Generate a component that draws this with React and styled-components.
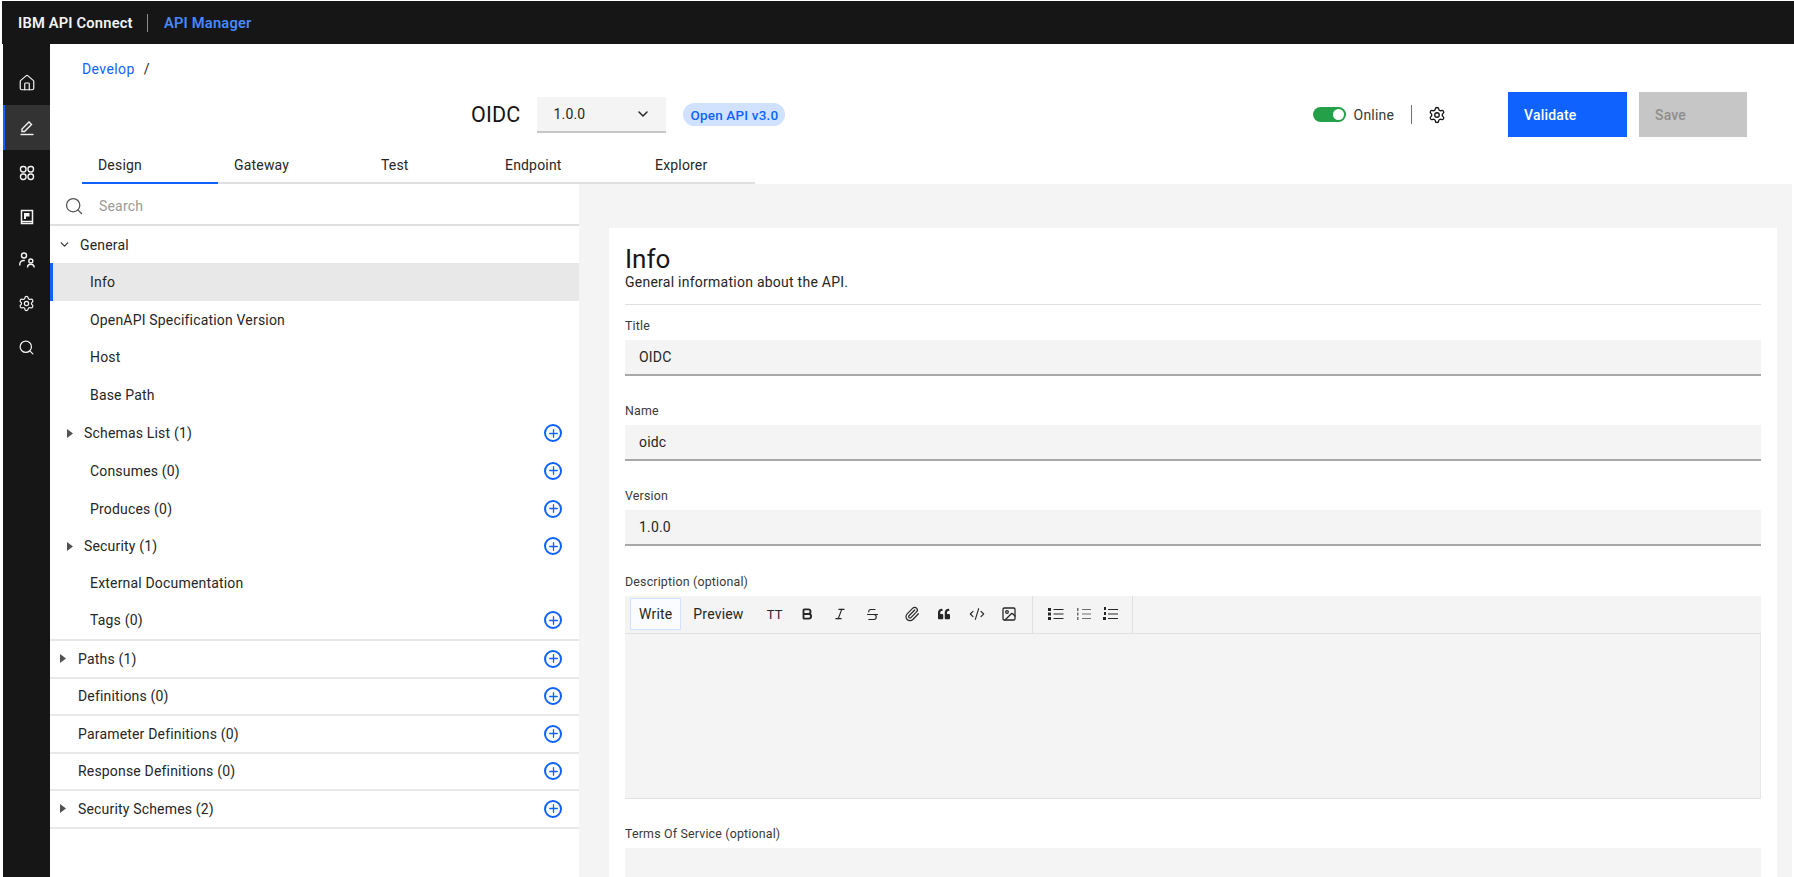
import React from "react";
import styled, { createGlobalStyle } from "styled-components";
import {
  Bold,
  ChevronDown,
  CodeXml,
  House,
  Image as ImageIcon,
  Italic,
  Paperclip,
  Plus,
  Search,
  Settings,
  Strikethrough,
} from "lucide-react";
import { FaQuoteLeft } from "react-icons/fa";

const FONT = `Roboto, "Liberation Sans", sans-serif`;

const Global = createGlobalStyle`
  html, body { margin: 0; height: 100%; background: #fff; overflow: hidden; }
  * { box-sizing: border-box; }
  body { font-family: ${FONT}; font-size: 14px; color: #262626; letter-spacing: .18px; }
`;

function PenIcon() {
  return (
    <svg width="18" height="18" viewBox="0 0 18 18" fill="none" stroke="currentColor" strokeWidth="1.4">
      <path d="M4 12.5V10l7-7 2.5 2.5-7 7z" />
      <path d="M2.5 15.5h13" />
    </svg>
  );
}

function AppsIcon() {
  return (
    <svg width="18" height="18" viewBox="0 0 18 18" fill="none" stroke="currentColor" strokeWidth="1.4">
      <rect x="2.5" y="2.5" width="5.5" height="5.5" rx="2.4" />
      <rect x="10" y="2.5" width="5.5" height="5.5" rx="2.4" />
      <rect x="2.5" y="10" width="5.5" height="5.5" rx="2.4" />
      <rect x="10" y="10" width="5.5" height="5.5" rx="2.4" />
    </svg>
  );
}

function BookIcon() {
  return (
    <svg width="18" height="18" viewBox="0 0 18 18" fill="none" stroke="currentColor" strokeWidth="1.5">
      <rect x="3.5" y="2.5" width="11" height="13" />
      <path d="M6 5h5.5v3.5H8V11H6z" fill="currentColor" stroke="none" />
      <path d="M3.5 13.5h11" />
    </svg>
  );
}

function UsersIcon() {
  return (
    <svg width="18" height="18" viewBox="0 0 18 18" fill="none" stroke="currentColor" strokeWidth="1.4">
      <circle cx="6" cy="4.5" r="2.5" />
      <path d="M1.8 14.5v-1.2a3.8 3.8 0 0 1 3.8-3.8h1.2" />
      <circle cx="12.8" cy="10" r="2" />
      <path d="M9.5 16.5a3.3 3.3 0 0 1 6.6 0" />
    </svg>
  );
}

function BulletList() {
  return (
    <svg width="16" height="14" viewBox="0 0 16 14" fill="currentColor">
      <path d="M0 1h3v3H0zM0 5.5h3v3H0zM0 10h3v3H0z" />
      <path d="M5.5 2h10v1h-10zM5.5 6.5h10v1h-10zM5.5 11h10v1h-10z" />
    </svg>
  );
}

function OrderedList() {
  return (
    <svg width="16" height="14" viewBox="0 0 16 14" fill="#6f6f6f">
      <path d="M1 1h1.5v3H1zM1 5.5h1.5v3H1zM1 10h1.5v3H1z" />
      <path d="M6 2h9v1H6zM6 6.5h9v1H6zM6 11h9v1H6z" />
    </svg>
  );
}

function TaskList() {
  return (
    <svg width="16" height="14" viewBox="0 0 16 14" fill="currentColor">
      <path d="M1 0h2v3H1zM1 5h2v3H1zM0 10h3v3H0z" />
      <path d="M5 2h10v1H5zM5 6.5h10v1H5zM5 11h10v1H5z" />
    </svg>
  );
}

function CaretRight() {
  return (
    <svg width="6" height="9" viewBox="0 0 6 9">
      <path d="M0 0l6 4.5L0 9z" fill="#525252" />
    </svg>
  );
}

function AddButton() {
  return (
    <AddCircle>
      <Plus size={13} strokeWidth={2.4} />
    </AddCircle>
  );
}

const railItems = [
  { key: "home", height: 45, icon: <House size={18} strokeWidth={1.6} /> },
  { key: "develop", height: 45, icon: <PenIcon />, active: true },
  { key: "apps", height: 45, icon: <AppsIcon /> },
  { key: "book", height: 43, icon: <BookIcon /> },
  { key: "users", height: 44, icon: <UsersIcon /> },
  { key: "settings", height: 43, icon: <Settings size={17} strokeWidth={1.7} /> },
  { key: "search", height: 44, icon: <Search size={17} strokeWidth={1.7} /> },
];

const tabs = ["Design", "Gateway", "Test", "Endpoint", "Explorer"];

const subRows = [
  { label: "Info", selected: true },
  { label: "OpenAPI Specification Version" },
  { label: "Host" },
  { label: "Base Path" },
  { label: "Schemas List (1)", caret: true, add: true },
  { label: "Consumes (0)", add: true },
  { label: "Produces (0)", add: true },
  { label: "Security (1)", caret: true, add: true },
  { label: "External Documentation", short: true },
  { label: "Tags (0)", add: true },
];

const topRows = [
  { label: "Paths (1)", caret: true },
  { label: "Definitions (0)" },
  { label: "Parameter Definitions (0)" },
  { label: "Response Definitions (0)" },
  { label: "Security Schemes (2)", caret: true },
];

const fields = [
  { label: "Title", value: "OIDC" },
  { label: "Name", value: "oidc" },
  { label: "Version", value: "1.0.0" },
];

export default function App() {
  return (
    <Page>
      <Global />
      <TopBar>
        <Product>IBM API Connect</Product>
        <TopDivider />
        <Suite>API Manager</Suite>
      </TopBar>
      <Body>
        <Rail>
          {railItems.map((item) => (
            <RailItem key={item.key} $height={item.height} $active={item.active}>
              {item.icon}
            </RailItem>
          ))}
        </Rail>
        <Main>
          <Breadcrumb>
            <a>Develop</a>
            <span>/</span>
          </Breadcrumb>
          <TitleRow>
            <ApiName>OIDC</ApiName>
            <VersionSelect>
              1.0.0
              <ChevronDown size={16} strokeWidth={2.2} />
            </VersionSelect>
            <Badge>Open API v3.0</Badge>
            <Status>
              <Toggle />
              <span>Online</span>
              <StatusDivider />
              <Settings size={18} strokeWidth={1.8} color="#161616" />
            </Status>
            <ActionButton $primary>Validate</ActionButton>
            <ActionButton>Save</ActionButton>
          </TitleRow>
          <TabBar>
            {tabs.map((tab, i) => (
              <Tab key={tab} $active={i === 0}>
                {tab}
              </Tab>
            ))}
          </TabBar>
          <Workspace>
            <Nav>
              <SearchRow>
                <Search size={20} strokeWidth={1.5} color="#525252" />
                <span>Search</span>
              </SearchRow>
              <GeneralRow>
                <ChevronDown size={13} strokeWidth={2.4} color="#393939" />
                General
              </GeneralRow>
              {subRows.map((row) => (
                <SubRow key={row.label} $selected={row.selected} $short={row.short} $caret={row.caret}>
                  {row.caret && <CaretRight />}
                  <RowLabel>{row.label}</RowLabel>
                  {row.add && <AddButton />}
                </SubRow>
              ))}
              <TopGroup>
                {topRows.map((row) => (
                  <TopRow key={row.label} $caret={row.caret}>
                    {row.caret && <CaretRight />}
                    <RowLabel>{row.label}</RowLabel>
                    <AddButton />
                  </TopRow>
                ))}
              </TopGroup>
            </Nav>
            <Content>
              <Card>
                <CardTitle>Info</CardTitle>
                <CardSubtitle>General information about the API.</CardSubtitle>
                <CardRule />
                {fields.map((field) => (
                  <Field key={field.label}>
                    <FieldLabel>{field.label}</FieldLabel>
                    <TextInput readOnly value={field.value} />
                  </Field>
                ))}
                <Field>
                  <FieldLabel>Description (optional)</FieldLabel>
                  <Toolbar>
                    <ModeButton $active>Write</ModeButton>
                    <ModeButton>Preview</ModeButton>
                    <Tool $first>TT</Tool>
                    <Tool><Bold size={14} strokeWidth={3.2} /></Tool>
                    <Tool><Italic size={14} strokeWidth={2} /></Tool>
                    <Tool><Strikethrough size={15} strokeWidth={1.8} /></Tool>
                    <Tool $spaced><Paperclip size={16} strokeWidth={1.8} /></Tool>
                    <Tool><FaQuoteLeft size={12} /></Tool>
                    <Tool><CodeXml size={16} strokeWidth={1.7} /></Tool>
                    <Tool><ImageIcon size={16} strokeWidth={1.9} /></Tool>
                    <ToolGroup>
                      <Tool><BulletList /></Tool>
                      <Tool><OrderedList /></Tool>
                      <Tool><TaskList /></Tool>
                    </ToolGroup>
                  </Toolbar>
                  <EditorArea />
                </Field>
                <Field>
                  <FieldLabel>Terms Of Service (optional)</FieldLabel>
                  <TextInput readOnly value="" />
                </Field>
              </Card>
            </Content>
          </Workspace>
        </Main>
      </Body>
    </Page>
  );
}

const Page = styled.div`
  height: 100vh;
  padding: 1px 0 0 3px;
  display: flex;
  flex-direction: column;
  overflow: hidden;
`;

const TopBar = styled.header`
  height: 43px;
  flex: none;
  margin-left: -1px;
  padding-left: 16px;
  background: #161616;
  display: flex;
  align-items: center;
  font-weight: 600;
  font-size: 14.7px;
`;

const Product = styled.span`
  color: #f4f4f4;
  width: 116px;
  white-space: nowrap;
`;

const TopDivider = styled.span`
  width: 1px;
  height: 18px;
  margin: 0 16px 0 13px;
  background: #8d8d8d;
`;

const Suite = styled.span`
  color: #4589ff;
`;

const Body = styled.div`
  flex: 1;
  min-height: 0;
  display: flex;
`;

const Rail = styled.nav`
  width: 47px;
  flex: none;
  padding-top: 16px;
  background: #161616;
`;

const RailItem = styled.div`
  height: ${(p) => p.$height}px;
  display: flex;
  align-items: center;
  justify-content: center;
  color: #f4f4f4;
  border-left: 2px solid ${(p) => (p.$active ? "#0f62fe" : "transparent")};
  padding-right: 2px;
  background: ${(p) => (p.$active ? "#333333" : "transparent")};
`;

const Main = styled.main`
  flex: 1;
  min-width: 0;
  display: flex;
  flex-direction: column;
`;

const Breadcrumb = styled.div`
  height: 16px;
  margin: 17px 0 15px 32px;
  display: flex;
  gap: 9px;
  line-height: 16px;
  letter-spacing: .4px;
  a { color: #0f62fe; }
`;

const TitleRow = styled.div`
  height: 45px;
  flex: none;
  padding: 0 47px 0 421px;
  display: flex;
  align-items: center;
`;

const ApiName = styled.h1`
  margin: 0 17px 0 0;
  font-size: 21.5px;
  font-weight: 400;
  color: #161616;
`;

const VersionSelect = styled.div`
  width: 129px;
  height: 36px;
  padding: 0 15px 0 16px;
  display: flex;
  align-items: center;
  justify-content: space-between;
  background: #f4f4f4;
  border-bottom: 2px solid #c6c6c6;
`;

const Badge = styled.span`
  margin-left: 17px;
  height: 23px;
  padding: 0 7px;
  border-radius: 12px;
  display: flex;
  align-items: center;
  font-size: 13.5px;
  font-weight: 500;
  color: #0f62fe;
  background: #d0e2ff;
`;

const Status = styled.div`
  margin-left: auto;
  margin-right: 62px;
  display: flex;
  align-items: center;
  color: #393939;
`;

const Toggle = styled.span`
  position: relative;
  width: 33px;
  height: 15px;
  margin-right: 8px;
  border-radius: 8px;
  background: #24a148;
  &::after {
    content: "";
    position: absolute;
    right: 2px;
    top: 2px;
    width: 11px;
    height: 11px;
    border-radius: 50%;
    background: #fff;
  }
`;

const StatusDivider = styled.span`
  width: 1px;
  height: 19px;
  margin: 0 16px 0 17px;
  background: #6f6f6f;
`;

const ActionButton = styled.div`
  width: ${(p) => (p.$primary ? "119px" : "108px")};
  height: 45px;
  margin-left: ${(p) => (p.$primary ? "0" : "12px")};
  padding-left: 16px;
  display: flex;
  align-items: center;
  font-weight: 500;
  color: ${(p) => (p.$primary ? "#fff" : "#8d8d8d")};
  background: ${(p) => (p.$primary ? "#0f62fe" : "#c6c6c6")};
`;

const TabBar = styled.div`
  width: 673px;
  height: 47px;
  flex: none;
  margin-left: 32px;
  display: grid;
  grid-template-columns: 136px 147px 124px 150px 116px;
  border-bottom: 2px solid #e0e0e0;
`;

const Tab = styled.div`
  height: 47px;
  padding: 20px 0 0 16px;
  line-height: 16px;
  color: #262626;
  border-bottom: 2px solid ${(p) => (p.$active ? "#0f62fe" : "transparent")};
`;

const Workspace = styled.div`
  flex: 1;
  min-height: 0;
  display: flex;
`;

const Nav = styled.aside`
  width: 529px;
  flex: none;
`;

const SearchRow = styled.div`
  height: 42px;
  padding: 3px 0 0 14px;
  display: flex;
  align-items: center;
  gap: 15px;
  color: #9a9a9a;
  border-bottom: 2px solid #e0e0e0;
`;

const GeneralRow = styled.div`
  height: 37px;
  padding-left: 8px;
  display: flex;
  align-items: center;
  gap: 9px;
`;

const SubRow = styled.div`
  height: ${(p) => (p.$short ? "36px" : "37.8px")};
  padding: 0 17px 0 ${(p) => (p.$caret ? "17px" : p.$selected ? "37px" : "40px")};
  display: flex;
  align-items: center;
  gap: 11px;
  background: ${(p) => (p.$selected ? "#e8e8e8" : "transparent")};
  border-left: ${(p) => (p.$selected ? "3px solid #0f62fe" : "none")};
`;

const RowLabel = styled.span`
  flex: 1;
`;

const TopGroup = styled.div`
  border-top: 2px solid #e8e8e8;
`;

const TopRow = styled.div`
  height: 37.5px;
  padding: 0 17px 0 ${(p) => (p.$caret ? "10px" : "28px")};
  display: flex;
  align-items: center;
  gap: 12px;
  border-bottom: 2px solid #e8e8e8;
`;

const AddCircle = styled.span`
  width: 18px;
  height: 18px;
  flex: none;
  display: flex;
  align-items: center;
  justify-content: center;
  border-radius: 50%;
  border: 2px solid #0f62fe;
  color: #0f62fe;
`;

const Content = styled.section`
  flex: 1;
  min-width: 0;
  margin-right: 2px;
  padding: 44px 15px 0 30px;
  background: #f4f4f4;
`;

const Card = styled.div`
  height: 100%;
  padding: 17px 16px 0;
  background: #fff;
`;

const CardTitle = styled.h2`
  margin: 0;
  font-size: 26px;
  line-height: 29px;
  font-weight: 400;
  letter-spacing: 0;
  color: #161616;
`;

const CardSubtitle = styled.p`
  margin: 0;
  line-height: 16px;
  letter-spacing: .25px;
  color: #262626;
`;

const CardRule = styled.hr`
  margin: 14px 0 13px;
  border: 0;
  border-top: 1px solid #e0e0e0;
`;

const Field = styled.div`
  margin-bottom: 27.2px;
`;

const FieldLabel = styled.label`
  display: block;
  height: 16px;
  margin-bottom: 6px;
  font-size: 12.4px;
  line-height: 16px;
  color: #393939;
`;

const TextInput = styled.input`
  display: block;
  width: 100%;
  height: 36px;
  padding: 0 14px;
  border: 0;
  border-bottom: 2px solid #a8a8a8;
  outline: 0;
  font: inherit;
  letter-spacing: inherit;
  color: #262626;
  background: #f4f4f4;
`;

const Toolbar = styled.div`
  height: 38px;
  padding-left: 5px;
  display: flex;
  align-items: center;
  background: #f4f4f4;
  border-bottom: 1px solid #e0e0e0;
`;

const ModeButton = styled.div`
  height: 32px;
  padding: 0 ${(p) => (p.$active ? "8px" : "10px")};
  margin-right: ${(p) => (p.$active ? "1px" : "0")};
  display: flex;
  align-items: center;
  color: #262626;
  background: ${(p) => (p.$active ? "#fafcff" : "transparent")};
  border: 1px solid ${(p) => (p.$active ? "#d0e2ff" : "transparent")};
`;

const Tool = styled.span`
  width: 32.5px;
  height: 100%;
  margin-left: ${(p) => (p.$spaced ? "7px" : p.$first ? "4px" : "0")};
  display: flex;
  align-items: center;
  justify-content: center;
  font-size: 13px;
  color: #262626;
`;

const ToolGroup = styled.div`
  height: 100%;
  margin-left: 6px;
  padding: 0 7px 0 10px;
  display: flex;
  border-left: 1px solid #e0e0e0;
  border-right: 1px solid #e0e0e0;
  & > span { width: 27.5px; }
`;

const EditorArea = styled.div`
  height: 165px;
  background: #f4f4f4;
  border-right: 1px solid #e8e8e8;
  border-bottom: 1px solid #e0e0e0;
`;
